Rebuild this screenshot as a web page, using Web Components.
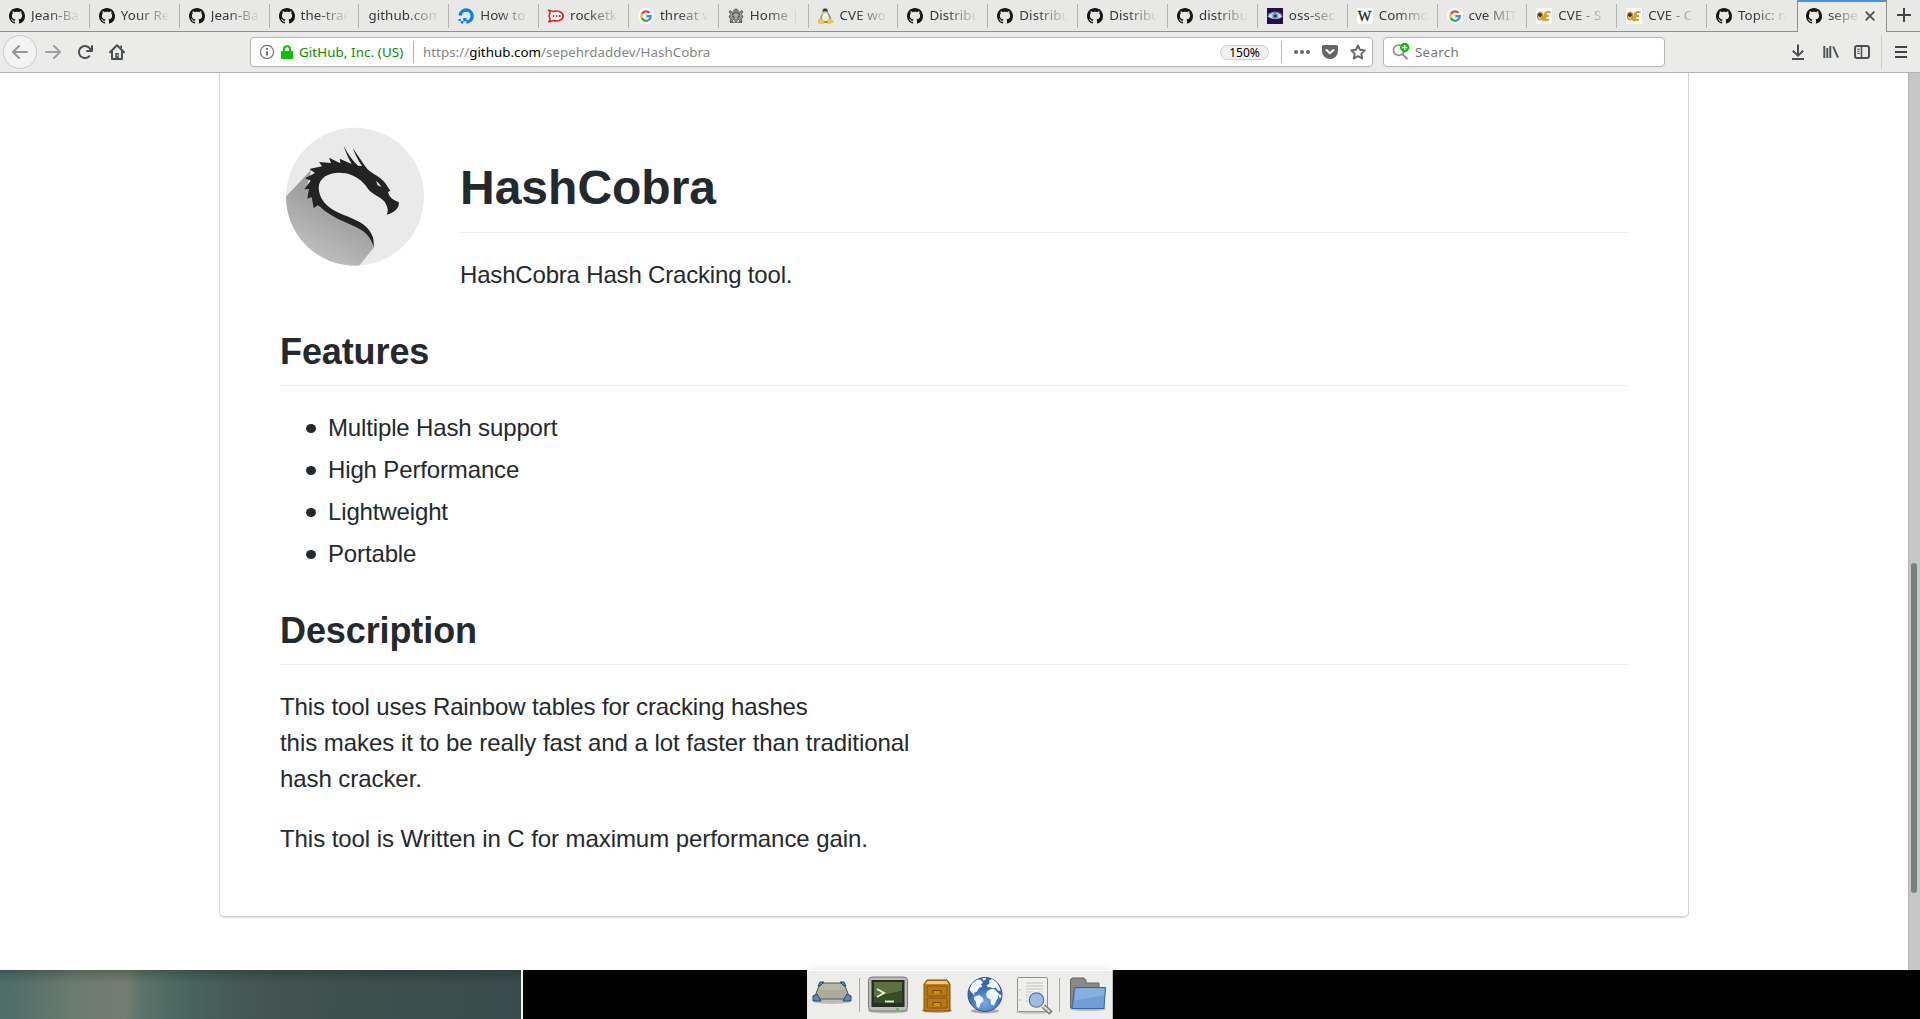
<!DOCTYPE html>
<html lang="en">
<head>
<meta charset="utf-8">
<title>HashCobra</title>
<style>
html,body{margin:0;height:100%;overflow:hidden;background:#000}
body{font-family:"Noto Sans","DejaVu Sans",sans-serif}
</style>
</head>
<body>
<desktop-screen></desktop-screen>
<script>
const svg=(vb,body,w=16,h=16)=>`<svg xmlns="http://www.w3.org/2000/svg" viewBox="${vb}" width="${w}" height="${h}">${body}</svg>`;
const ICONS={
github:svg('0 0 16 16','<path fill="#161616" fill-rule="evenodd" d="M8 0C3.58 0 0 3.58 0 8c0 3.54 2.29 6.53 5.47 7.59.4.07.55-.17.55-.38 0-.19-.01-.82-.01-1.49-2.01.37-2.53-.49-2.69-.94-.09-.23-.48-.94-.82-1.13-.28-.15-.68-.52-.01-.53.63-.01 1.08.58 1.23.82.72 1.21 1.87.87 2.33.66.07-.52.28-.87.51-1.07-1.78-.2-3.64-.89-3.64-3.95 0-.87.31-1.59.82-2.15-.08-.2-.36-1.02.08-2.12 0 0 .67-.21 2.2.82.64-.18 1.32-.27 2-.27s1.36.09 2 .27c1.53-1.04 2.2-.82 2.2-.82.44 1.1.16 1.92.08 2.12.51.56.82 1.27.82 2.15 0 3.07-1.87 3.75-3.65 3.95.29.25.54.73.54 1.48 0 1.07-.01 1.93-.01 2.2 0 .21.15.46.55.38A8.01 8.01 0 0 0 16 8c0-4.42-3.58-8-8-8z"/>'),
ocean:svg('0 0 16 16','<path d="M2.2 7.5A6 6 0 1 1 8.4 14" fill="none" stroke="#0a80ff" stroke-width="3.4"/><path fill="#0a80ff" d="M5.3 10h3.2v3.2H5.3zM2.8 13h2.5v2.5H2.8zM.6 10.9h2.2V13H.6z"/>'),
rocket:svg('0 0 16 16','<path d="M.8 2.2c1.8 0 3 .5 3.9 1.3C10 2 15.2 4 15.2 8S10 14 4.700 12.500C3.800 13.300 2.600 13.800.8 13.800c1.100-1.100 1.500-2 1.300-3.100C1 9 1 7 2.100 5.300 2.300 4.200 1.900 3.300.8 2.200z" fill="#fff" stroke="#db2323" stroke-width="1.6"/><g fill="#db2323"><circle cx="5.500" cy="8" r="1"/><circle cx="8.500" cy="8" r="1"/><circle cx="11.500" cy="8" r="1"/></g>'),
google:svg('0 0 16 16','<circle cx="8" cy="8" r="8" fill="#fff"/><g fill="none" stroke-width="2.300"><path stroke="#ea4335" d="M3.900 6A4.700 4.700 0 0 1 11.500 4.700"/><path stroke="#fbbc05" d="M3.900 10.200A4.700 4.700 0 0 1 3.900 5.900"/><path stroke="#34a853" d="M11.300 11.500A4.700 4.700 0 0 1 3.800 10"/><path stroke="#4285f4" d="M8.200 8.200h4.500A4.600 4.600 0 0 1 11 11.700"/></g>'),
crest:svg('0 0 16 16','<g fill="#858585" stroke="#4c4c4c" stroke-width=".7"><path d="M5.500 2.500 8 .7l2.500 1.800-.5 2H6zM5 5h6v6l-3 3-3-3z"/><path d="M4.500 4 2 2.500 1 4l1.500 2L1 9l1.500 2L2 14h3l-1-3 1-3zM11.500 4 14 2.500 15 4l-1.500 2L15 9l-1.500 2 .5 3h-3l1-3-1-3zM2 14.500h12"/></g><path stroke="#ddd" stroke-width=".6" d="M5 7h6M8 5v7M2 7h2M12 7h2M3 10h2M11 10h2"/>'),
tux:svg('0 0 16 16','<path fill="#8b8b88" d="M4.500 2.500C4.500.7 6 0 7.300 0 9 0 9.700 1 9.700 3c0 2 3.300 4 3.300 8l-2 4H5l-3-3c0-4 2.700-6 2.700-8z"/><path fill="#f2f2f2" d="M5.500 4.500h3.800c.7 3 2.500 4 1.800 8.500H4.700c-1.200-4-.2-6 .8-8.500z"/><path d="M4.800 2 7 .7 9.600 2v1.500H4.800z" fill="#2c3138"/><path fill="#f7cd2b" stroke="#dba718" stroke-width=".4" d="M5.300 3.500h3.400L7 5.200zM.5 11.800l2.800-1.800 3.200 4-1 1.800-5-.6zM10 11.800l2.500-1.600 2.900 3.500-3.700 2.100-2.200-.6z"/>'),
eye:svg('0 0 16 16','<rect width="16" height="16" fill="#2b0a48"/><path d="M.5 8.500C4 3 12 3 15.500 8.500 11 12 5 12 .5 8.500z" fill="#c1dce8"/><circle cx="8.200" cy="8" r="2.900" fill="#5096ae"/><circle cx="8.200" cy="8" r="1.300" fill="#18304a"/><path d="M1 6.500Q8 1.500 15 6.500" fill="none" stroke="#629bb2"/>'),
wiki:`<span class="wiki">W</span>`,
cve:svg('0 0 16 16','<rect width="16" height="16" fill="#fff"/><ellipse cx="4.200" cy="8" rx="2.900" ry="4" fill="#f4c976" stroke="#8a6a35" stroke-width=".8"/><circle cx="4" cy="7" r="2" fill="#343434"/><path d="M5 9.500 7 12l2.200-7.500M14.500 4h-4L9 12h4M10 8h3" fill="none" stroke="#dca02c" stroke-width="1.800"/>'),
back:svg('0 0 16 16','<path fill="#969696" d="M15 7H3.414l4.293-4.293a1 1 0 0 0-1.414-1.414l-6 6a1 1 0 0 0 0 1.414l6 6a1 1 0 0 0 1.414-1.414L3.414 9H15a1 1 0 0 0 0-2z"/>'),
fwd:svg('0 0 16 16','<path transform="matrix(-1 0 0 1 16 0)" fill="#9fa0a0" d="M15 7H3.414l4.293-4.293a1 1 0 0 0-1.414-1.414l-6 6a1 1 0 0 0 0 1.414l6 6a1 1 0 0 0 1.414-1.414L3.414 9H15a1 1 0 0 0 0-2z"/>'),
reload:svg('0 0 16 16','<path fill="#4a4f50" d="M15 1a1 1 0 0 0-1 1v2.418A6.995 6.995 0 1 0 8 15a6.954 6.954 0 0 0 4.950-2.050 1 1 0 0 0-1.414-1.414A5.019 5.019 0 1 1 12.549 6H10a1 1 0 0 0 0 2h5a1 1 0 0 0 1-1V2a1 1 0 0 0-1-1z"/>'),
home:svg('0 0 16 16','<path d="M1 8.200 8 1.200l7 7M3 7.500V15h10V7.500" fill="none" stroke="#4a4f50" stroke-width="2" stroke-linecap="round" stroke-linejoin="round"/><path fill="#4a4f50" d="M11.300 1.500H13V5l-1.700-1.500zM6.300 9h3.400v6H6.300z"/><path fill="#ddd" d="M7.700 10.500h1v1.700h-1z"/>'),
info:svg('0 0 16 16','<circle cx="8" cy="8" r="6.600" fill="none" stroke="#737373" stroke-width="1.200"/><path d="M8 7.200v4.300" stroke="#737373" stroke-width="2"/><circle cx="8" cy="4.900" r="1.150" fill="#737373"/>'),
lock:svg('0 0 12 14','<path d="M3 7V4.200a3 3 0 0 1 6 0V7" fill="none" stroke="#12bc00" stroke-width="2"/><rect y="6" width="12" height="8" rx="1" fill="#12bc00"/>',12,14),
dots:svg('0 0 16 16','<g fill="#666"><circle cx="2" cy="8" r="2"/><circle cx="8" cy="8" r="2"/><circle cx="14" cy="8" r="2"/></g>'),
pocket:svg('0 0 16 16','<path fill="#666" d="M1.500 1h13A1.500 1.500 0 0 1 16 2.500V7A8 8 0 0 1 0 7V2.500A1.500 1.500 0 0 1 1.500 1z"/><path d="M4.500 6 8 9.300 11.500 6" fill="none" stroke="#fff" stroke-width="2" stroke-linecap="round" stroke-linejoin="round"/>'),
star:svg('0 0 16 16','<path d="M8 1.500l2 4.300 4.800.6-3.500 3.200.9 4.900L8 12.200l-4.200 2.300.9-4.900L1.200 6.400 6 5.800z" fill="none" stroke="#666" stroke-width="1.900" stroke-linejoin="round"/>'),
search:svg('0 0 18 18','<circle cx="6.700" cy="7.200" r="5.200" fill="none" stroke="#8e8e8e" stroke-width="1.700"/><path d="M10.500 11.300l5 5" stroke="#8e8e8e" stroke-width="2"/><circle cx="12.700" cy="4.500" r="4.700" fill="#12bc00"/><path d="M12.700 1.900v5.200M10.100 4.500h5.200" stroke="#fff" stroke-width="1.500"/>',18,18),
down:svg('0 0 16 16','<path d="M8 .5v11M2.800 6.700 8 11.700l5.200-5M2 15h12" fill="none" stroke="#4a4f50" stroke-width="2"/>'),
library:svg('0 0 16 16','<path d="M1.300 2v12M4.300 4v10M7.300 2v12" stroke="#4a4f50" stroke-width="1.900"/><path d="M10.200 2.500 15 13.700" stroke="#4a4f50" stroke-width="1.900"/>'),
sidebar:svg('0 0 16 16','<rect x="1" y="2" width="14" height="12" rx="2" fill="none" stroke="#4a4f50" stroke-width="2"/><path d="M7.500 2v12" stroke="#4a4f50" stroke-width="1.500"/><path d="M3 5.200h3M3 7.300h2.500M3 9.400h3" stroke="#4a4f50" stroke-width=".9"/>'),
menu:svg('0 0 12 16','<path d="M0 3h12M0 8h12M0 13h12" stroke="#3f4445" stroke-width="2"/>',12,16),
plus:svg('0 0 14 14','<path d="M7 0v14M0 7h14" stroke="#3f4445" stroke-width="2"/>',14,14),
close:svg('0 0 10 10','<path d="M.7.7l8.600 8.600M9.300.7.7 9.300" stroke="#4c5152" stroke-width="1.800"/>',10,10),
dragon:svg('30 0 450 480',`<defs><clipPath id="c"><circle cx="255" cy="245" r="207"/></clipPath><linearGradient id="g" gradientUnits="userSpaceOnUse" x1="200" y1="290" x2="130" y2="410"><stop stop-color="#a0a0a0"/><stop offset="1" stop-color="#bcbcbc"/></linearGradient></defs><circle cx="255" cy="245" r="207" fill="#eaeaea"/><g clip-path="url(#c)"><path fill="url(#g)" d="M125 163 40 253V480h205L311 398 300 352 150 270 112 210z"/></g><path fill="#232323" d="M311 398C306 372 288 350 262 338C225 322 178 303 152 277L143 271 131 280 125 246 112 251 117 222 103 223 122 197 105 190 135 174 118 162 156 154 147 141 183 144 177 128 211 145 209 131 245 147C237 133 228 115 221 93C233 115 247 137 264 152L276 153C262 133 255 116 248 99C266 125 276 141 292 162C309 178 331 186 343 201C351 211 354 218 361 227L354 231C357 242 362 253 386 261C390 271 379 293 350 299C357 286 352 276 345 262C331 244 308 240 295 223C277 195 256 183 228 175C188 167 147 182 146 218C147 250 169 277 206 293C242 309 272 317 292 339C310 359 313 378 311 398z"/><path fill="#eaeaea" d="M318 197 328 207 334 216 323 211z"/>`,150,160)
};
const DOCK={
desk:svg('0 0 40 40','<ellipse cx="20" cy="26" rx="19" ry="3" fill="#bbb"/><path d="M8 8h24l6 16H2z" fill="#a9ab9c" stroke="#55584f"/><path d="M9 9h22l2 6H7z" fill="#b6b8aa"/><g fill="#6683b3" stroke="#2d4572"><path d="M6 11 8 7h4L8 11zM34 11l-2-4h-4l4 4zM1 21l4-2 4 7H1zM39 21l-4-2-4 7h8z"/></g>',40,40),
term:svg('0 0 42 40','<ellipse cx="21" cy="36" rx="20" ry="2.500" fill="#bbb"/><rect x="1.500" y="2" width="39" height="34" rx="3.500" fill="#bbbdb9" stroke="#777a74"/><rect x="4.500" y="5" width="33" height="27" fill="#292e25"/><path d="M7 7h28v9L7 22z" fill="#5b7043"/><path d="M7 22 35 16v12H7z" fill="#364d25"/><path d="m10 14 7 4-7 4" fill="none" stroke="#dff5d9" stroke-width="1.900"/><path d="M18 26.500h9" stroke="#dff5d9" stroke-width="1.900"/><path d="M29 34h3" stroke="#69bc36" stroke-width="2"/>',42,40),
cabinet:svg('0 0 32 40','<ellipse cx="16" cy="35.500" rx="15" ry="2.500" fill="#aaa"/><path d="M6 5h20l3 4v27H3V9z" fill="#c37f16" stroke="#744b0b"/><path d="M6.500 6h19l2 3h-23z" fill="#eec887"/><path d="M6 11h20v10H6zM6 23h20v10H6z" fill="#b87813" stroke="#855409"/><path d="M12 19v-3.500h8V19M12 31v-3.500h8V31" fill="#c98a27" stroke="#744b0b"/>',32,40),
globe:svg('0 0 36 40','<defs><radialGradient id="b" cx=".5" cy=".75"><stop stop-color="#75abdf"/><stop offset="1" stop-color="#3369b3"/></radialGradient></defs><ellipse cx="18" cy="36" rx="14" ry="2.500" fill="#aaa"/><circle cx="18" cy="19.500" r="17" fill="url(#b)" stroke="#394e8b"/><path fill="#f2f5f8" d="M2.500 15C4 9 7 6 11 4.500l3 .5 2 2.500-2 2 1.500 2-3.500 1.500-2 3.500-3 1.500 1 2.500-2.500-2zM7.500 21.500l4.500-1.500 4 3 .5 3-3 2.500-1.500 5-2.500-2-.5-5-2-2zM15 3.500l4-.8-.5 2.300-2 .5zM22 5.500l3-1.500 4 2.700 3 4.300 1.700 5-2.700-.5-2.500-3-2.500 1-3-1.500-2 .5-1.500-2 3-2zM20.500 16l3.500-2 4 .5 4 4.500-1 4-2 3-2 4.500-3-1-.5-5-3.500-2-1-3.500zM32 19l2.500 1-1 3.500-1.500-1z"/>',36,40),
find:svg('0 0 38 40','<ellipse cx="18" cy="37" rx="17" ry="2" fill="#c6c6c6"/><rect x="2.500" y="2.500" width="30" height="34" rx="1" fill="#efefed" stroke="#91928e"/><path d="M11 8h17M11 11h17M11 14h17M11 17h17M11 20h12M11 23h9M11 26h9" stroke="#c2c3c0" stroke-width="1.200"/><circle cx="5" cy="15" r=".8" fill="#aaa"/><circle cx="5" cy="25" r=".8" fill="#aaa"/><path d="m27 30 9 8" stroke="#70716d" stroke-width="5"/><path d="m28 31 7 6" stroke="#cfd0cd" stroke-width="2.500"/><circle cx="21.500" cy="25" r="8" fill="#9bbde3" stroke="#eeeeec" stroke-width="2.500"/><circle cx="21.500" cy="25" r="7.200" fill="none" stroke="#5574a6" stroke-width="1.300"/>',38,40),
folder:svg('0 0 38 40','<ellipse cx="19" cy="34" rx="18" ry="2" fill="#bbb"/><path d="M1.500 33V4.500L3 3h12l2 2v3h13v6H6v19z" fill="#898a86" stroke="#666763"/><path d="M5.500 12.500h31L35 33.500H3z" fill="#6f9fd6" stroke="#3465a4"/><path d="M6.500 13.500h29l-.8 7-29 5z" fill="#86aede"/>',38,40)
};
const define=(name,html,setup)=>customElements.define(name,class extends HTMLElement{
 constructor(){super();const t=document.createElement('template');t.innerHTML=html;this.attachShadow({mode:'open'}).append(t.content.cloneNode(true));}
 connectedCallback(){setup&&setup(this,this.shadowRoot)}
});
define('ui-icon','<style>:host{display:flex;flex:none}svg{display:block}.wiki{display:block;width:16px;height:16px;border-radius:3px;background:#fff;color:#222;font:14.500px/16px "Liberation Serif",serif;text-align:center;text-indent:0;-webkit-text-stroke:.3px #222}</style><span id="i" style="display:block"></span>',(e,r)=>{const n=e.getAttribute('name');r.getElementById('i').innerHTML=ICONS[n]||DOCK[n]});

define('browser-tab',`<style>
:host{display:flex;flex:0 0 89.857px;min-width:0;box-sizing:border-box;height:32px;padding:0 10px 1px 9px;align-items:center;border-bottom:1px solid #8e908f;position:relative;font-size:13.333px;color:#34393a}
:host::after{content:"";position:absolute;right:0;top:4px;width:1px;height:24px;background:#b0b0af}
:host([last])::after{display:none}
ui-icon{margin:2px 6px 0 0}
.label{flex:1;min-width:0;overflow:hidden;white-space:nowrap;line-height:20px;letter-spacing:.1px;-webkit-mask-image:linear-gradient(90deg,#000 calc(100% - 32px),transparent);mask-image:linear-gradient(90deg,#000 calc(100% - 32px),transparent)}
:host([active]){background:#ebebea;border:solid #8e908f;border-width:0 1px;box-shadow:inset 0 2px #4a90d9;padding:0 11px 2px 8px}
:host([active])::after{display:none}
.x{display:none;margin:2px 0 0 4px}:host([active]) .x{display:flex}
</style><ui-icon class="f"></ui-icon><span class="label"><slot></slot></span><ui-icon class="x" name="close"></ui-icon>`);

define('tab-strip',`<style>:host{display:flex;height:32px;background:#e8e8e7}.new{flex:1;display:flex;justify-content:center;align-items:center;border-bottom:1px solid #8e908f;padding-left:1px;padding-bottom:1px}</style><slot></slot><div class="new"><ui-icon name="plus"></ui-icon></div>`,(e)=>{
 [['github','Jean-Ba'],['github','Your Rep'],['github','Jean-Ba'],['github','the-trae'],['','github.com'],['ocean','How to'],['rocket','rocketk'],['google','threat v'],['crest','Home |'],['tux','CVE wo'],['github','Distribu'],['github','Distribu'],['github','Distribu'],['github','distribut'],['eye','oss-sec'],['wiki','Commo'],['google','cve MIT'],['cve','CVE - S'],['cve','CVE - C'],['github','Topic: ra'],['github','sepe']].forEach(([i,t],k)=>{
  const b=document.createElement('browser-tab');b.textContent=t;
  const f=b.shadowRoot.querySelector('.f');i?f.setAttribute('name',i):f.remove();
  if(k===19)b.setAttribute('last','');if(k===20)b.setAttribute('active','');e.append(b)});
});

define('address-field',`<style>
:host{display:flex;align-items:center;box-sizing:border-box;width:1123px;height:30px;border:1px solid #b6b6b3;border-radius:4px;background:#fff;box-shadow:0 1px 1px #0000000a;font-size:13.333px;padding:0 6px 0 8px;color:#858585;white-space:nowrap}
.id{color:#0b8a00;margin-left:6px;width:114px;letter-spacing:.1px}.sep{width:1px;height:22px;background:#8ad084;margin-right:9px}
.url{flex:1;letter-spacing:.03px}.url b{font-weight:400;color:#000}
.zoom{box-sizing:border-box;width:49px;height:15px;border:1px solid #cfcfcf;border-radius:8px;background:#f0f0f0;color:#000;font-size:12px;line-height:13px;text-align:center;margin-right:12px}
.s2{width:1px;height:22px;background:#b8b8b8;margin-right:12px}.a{margin-right:12px}
</style><ui-icon name="info"></ui-icon><ui-icon name="lock" style="margin-left:6px"></ui-icon><span class="id">GitHub, Inc. (US)</span><span class="sep"></span><span class="url">https://<b>github.com</b>/sepehrdaddev/HashCobra</span><span class="zoom">150%</span><span class="s2"></span><ui-icon class="a" name="dots"></ui-icon><ui-icon class="a" name="pocket"></ui-icon><ui-icon name="star"></ui-icon>`);

define('search-field',`<style>:host{display:flex;align-items:center;box-sizing:border-box;width:282px;height:30px;margin-left:10px;border:1px solid #b6b6b3;border-radius:4px;background:#fff;padding-left:8px;gap:5px;font-size:13.333px;color:#757575}span{letter-spacing:.3px}</style><ui-icon name="search"></ui-icon><span>Search</span>`);

define('nav-bar',`<style>
:host{display:flex;align-items:center;box-sizing:border-box;height:41px;background:#ebebea;border-bottom:1px solid #b4b5b2;padding:0 13px 0 3px}
.back{display:flex;align-items:center;justify-content:center;box-sizing:border-box;width:34px;height:34px;border:1px solid #cacac9;border-radius:50%;background:#f3f3f3;margin-right:8px}
address-field{margin-left:125px}.gap{flex:1}.sep{width:1px;height:34px;background:#cfcfce;margin:0 13px 0 11px}
</style><span class="back"><ui-icon name="back"></ui-icon></span><ui-icon name="fwd"></ui-icon><ui-icon name="reload" style="margin-left:16px"></ui-icon><ui-icon name="home" style="margin-left:16px"></ui-icon><address-field></address-field><search-field></search-field><span class="gap"></span><ui-icon name="down" style="margin-right:17px"></ui-icon><ui-icon name="library" style="margin-right:15px"></ui-icon><ui-icon name="sidebar"></ui-icon><span class="sep"></span><ui-icon name="menu"></ui-icon>`);

define('readme-card',`<style>
:host{display:block;box-sizing:border-box;width:1470px;height:844px;margin-left:219px;padding:42px 60px 0;border:solid #d1d5da;border-width:0 1px 1px;border-radius:0 0 5px 5px;box-shadow:0 1px 1px #1b1f2326;background:#fff;font:24px/36px "Liberation Sans",sans-serif;color:#24292e}
.top{display:flex;gap:30px;height:178px}.main{flex:1;padding-top:42.600px}
h1,h2{margin:0;line-height:1.25;font-weight:700;border-bottom:1px solid #eaecef}
h1{font-size:48px;padding-bottom:14.400px;margin-bottom:24px}
h2{font-size:36px;padding-bottom:10.800px;margin:36px 0 24px;letter-spacing:-.1px}
p{margin:0 0 24px}.main p{letter-spacing:-.18px}.l1{letter-spacing:-.12px}.l2{letter-spacing:-.045px}.l3{letter-spacing:-.07px}
ul{list-style:none;margin:0;padding:0 0 0 48px;letter-spacing:-.14px}li{display:flex;align-items:center}li+li{margin-top:6px}
li::before{content:"";width:10px;height:9px;border-radius:50%;background:#24292e;margin:1px 12px 0 -22px}
</style><div class="top"><ui-icon name="dragon"></ui-icon><div class="main"><h1>HashCobra</h1><p>HashCobra Hash Cracking tool.</p></div></div>
<h2>Features</h2><ul><li>Multiple Hash support</li><li>High Performance</li><li>Lightweight</li><li>Portable</li></ul>
<h2>Description</h2><p><span class="l1">This tool uses Rainbow tables for cracking hashes</span><br><span class="l2">this makes it to be really fast and a lot faster than traditional</span><br><span class="l3">hash cracker.</span></p><p class="l3">This tool is Written in C for maximum performance gain.</p>`);

define('page-view',`<style>:host{display:flex;justify-content:space-between;height:897px;background:#fff;overflow:hidden}.bar{box-sizing:border-box;width:12px;background:#c5c7c6;border-left:1px solid #b3b5ae;padding:490px 0 0 2px}.thumb{width:6px;height:330px;border-radius:3px;background:#7b8080}</style><readme-card></readme-card><div class="bar"><div class="thumb"></div></div>`);

define('app-dock',`<style>:host{display:flex;box-sizing:border-box;width:306px;height:49px;background:#ededeb;border-top:1px solid #fff;border-right:1px solid #bbb;padding:4px 0 0 5px;box-shadow:0 -3px 8px -2px #0000001c}i{width:1px;height:34px;background:#aaa;margin-top:3px}</style>
<ui-icon name="desk"></ui-icon><i style="margin-left:7px"></i><ui-icon name="term" style="margin-left:7px"></ui-icon><ui-icon name="cabinet" style="margin-left:12px"></ui-icon><ui-icon name="globe" style="margin-left:14px"></ui-icon><ui-icon name="find" style="margin-left:12px"></ui-icon><i style="margin-left:6px"></i><ui-icon name="folder" style="margin-left:9px"></ui-icon>`);

define('desktop-screen',`<style>:host{display:flex;flex-direction:column;width:1920px;height:1019px;overflow:hidden;background:#000}.bottom{display:flex;height:49px;z-index:1}
.wall{box-sizing:border-box;width:523px;border-right:2px solid #f2f2f2;background:linear-gradient(180deg,#0003,transparent 13px),linear-gradient(92deg,#4d6e69 0,#546f69 20px,#6b7b70 75px,#747d71 127px,#5b7469 142px,#48645f 190px,#465a58 230px,#43534f 280px,#3d504e 350px,#3a4b4b)}app-dock{margin-left:284px}</style><tab-strip></tab-strip><nav-bar></nav-bar><page-view></page-view><div class="bottom"><div class="wall"></div><app-dock></app-dock></div>`);
</script>
</body>
</html>
